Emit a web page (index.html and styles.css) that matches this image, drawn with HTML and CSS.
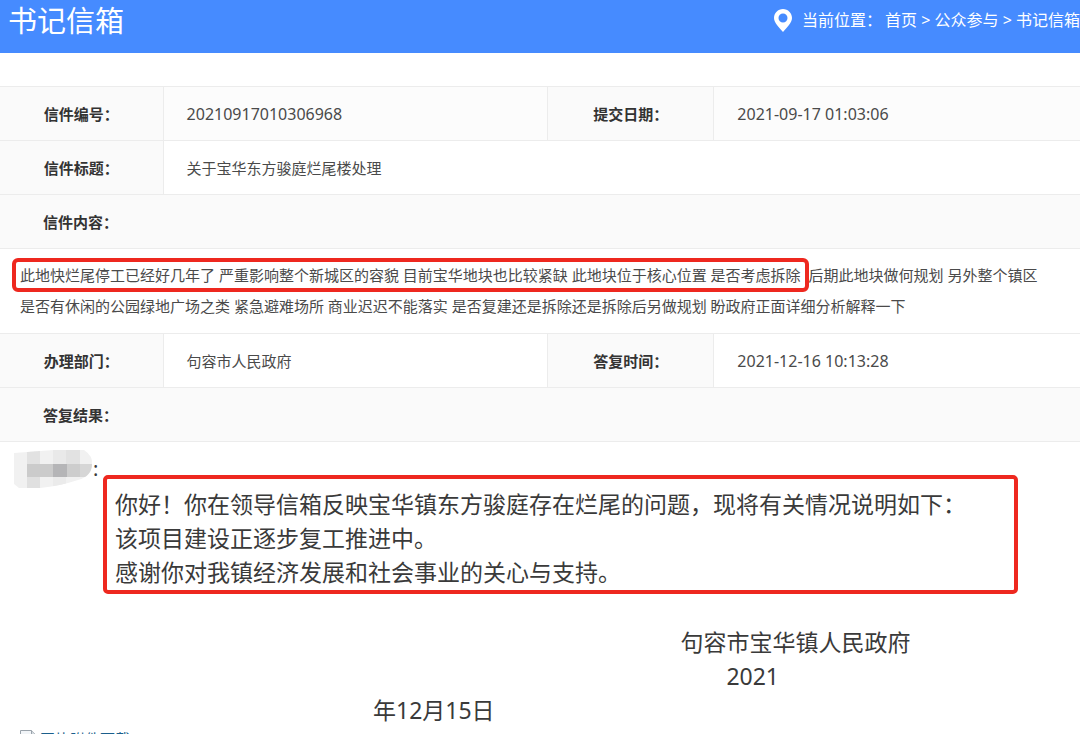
FILE: index.html
```
<!DOCTYPE html>
<html lang="zh-CN">

<head>
    <meta charset="UTF-8">
    <meta name="viewport" content="width=device-width, initial-scale=1.0" />
    <title>书记信箱</title>
    <link rel="stylesheet" href="styles.css">
</head>

<body>
    <header class="top-bar">
        <h1>书记信箱</h1>
        <nav class="crumbs">
            <svg class="pin" viewBox="0 0 18 23" width="18" height="23" aria-hidden="true">
                <path fill="#fff" fill-rule="evenodd" d="M9 0C4 0 0 4 0 9c0 5 5 9 9 14 4-5 9-9 9-14 0-5-4-9-9-9zm0 4.500a4.500 4.500 0 1 1 0 9 4.500 4.500 0 0 1 0-9z" />
            </svg>
            <span class="crumbs-label">当前位置：</span>
            <span><a href="#">首页</a> &gt; <a href="#">公众参与</a> &gt; <a href="#">书记信箱</a></span>
        </nav>
    </header>

    <main>
        <table class="letter">
            <colgroup>
                <col class="col-label">
                <col class="col-value">
                <col class="col-label-wide">
                <col>
            </colgroup>
            <tbody>
                <tr class="shaded">
                    <th scope="row">信件编号：</th>
                    <td class="num">20210917010306968</td>
                    <th scope="row">提交日期：</th>
                    <td class="num">2021-09-17 01:03:06</td>
                </tr>
                <tr>
                    <th scope="row">信件标题：</th>
                    <td colspan="3">关于宝华东方骏庭烂尾楼处理</td>
                </tr>
                <tr>
                    <th class="section" colspan="4">信件内容：</th>
                </tr>
                <tr>
                    <td class="content" colspan="4"><span class="mark">此地快烂尾停工已经好几年了 严重影响整个新城区的容貌 目前宝华地块也比较紧缺 此地块位于核心位置 是否考虑拆除</span> 后期此地块做何规划 另外整个镇区<br>是否有休闲的公园绿地广场之类 紧急避难场所 商业迟迟不能落实 是否复建还是拆除还是拆除后另做规划 盼政府正面详细分析解释一下</td>
                </tr>
                <tr>
                    <th scope="row">办理部门：</th>
                    <td>句容市人民政府</td>
                    <th scope="row">答复时间：</th>
                    <td class="num">2021-12-16 10:13:28</td>
                </tr>
                <tr>
                    <th class="section" colspan="4">答复结果：</th>
                </tr>
            </tbody>
        </table>

        <section class="reply">
            <div class="addressee">
                <!-- sender's name is hidden -->
                <svg viewBox="0 0 79 38" width="79" height="38" aria-hidden="true">
                    <clipPath id="blob">
                        <path d="M0 3L40 0h30q9 6 8 14 0 12-14 16Q46 36 26 38H5l-5-4z" />
                    </clipPath>
                    <g clip-path="url(#blob)">
                        <rect width="79" height="38" fill="#f1f1f1" />
                        <rect x="13" width="13" height="14" fill="#e2e2e2" />
                        <rect x="39" width="13" height="14" fill="#e9e9e9" />
                        <rect x="52" width="14" height="14" fill="#e2e2e2" />
                        <rect x="13" y="14" width="26" height="13" fill="#cbcbcb" />
                        <rect x="39" y="14" width="14" height="13" fill="#b5b5b7" />
                        <rect x="53" y="14" width="13" height="13" fill="#cdcdcd" />
                        <rect x="66" y="14" width="13" height="13" fill="#d6d6d6" />
                        <rect x="13" y="27" width="13" height="11" fill="#e0e0e0" />
                        <rect x="39" y="27" width="13" height="11" fill="#ebebeb" />
                    </g>
                </svg>
                <span>:</span>
            </div>
            <div class="answer">
                <p>你好！你在领导信箱反映宝华镇东方骏庭存在烂尾的问题，现将有关情况说明如下：</p>
                <p>该项目建设正逐步复工推进中。</p>
                <p>感谢你对我镇经济发展和社会事业的关心与支持。</p>
            </div>
            <div class="signature">
                <div class="sign-right">
                    <p>句容市宝华镇人民政府</p>
                    <p class="year">2021</p>
                </div>
                <p class="day">年12月15日</p>
            </div>
        </section>

        <div class="attachment">
            <svg viewBox="0 0 16 18" width="16" height="18" aria-hidden="true">
                <path fill="#f2f5f8" stroke="#9aa3ab" d="M.5.5h11l4 4v13H.5z" />
                <path fill="#d5dbe0" stroke="#9aa3ab" d="M11.500.5v4h4" />
            </svg>
            <a href="#">图片附件下载</a>
        </div>
    </main>
</body>

</html>
```
FILE: styles.css
```
body {
    margin: 0;
    background: #fff;
    color: #4a4a4a;
    font-family: "Noto Sans", "Noto Sans CJK SC", sans-serif;
    font-size: 15px;
}

h1,
p {
    margin: 0;
    font-weight: normal;
}

/* Blue title bar */
.top-bar {
    display: flex;
    justify-content: space-between;
    align-items: flex-start;
    height: 53px;
    padding-left: 8px;
    background: #468bff;
    color: #fff;
}

.top-bar h1 {
    font-size: 29px;
    line-height: 42px;
}

.crumbs {
    display: flex;
    align-items: center;
    font-size: 16px;
    line-height: 40px;
    white-space: nowrap;
}

.crumbs a {
    color: #fff;
    text-decoration: none;
}

.crumbs-label {
    margin-right: 3px;
}

.pin {
    margin-right: 10px;
}

/* Letter details */
.letter {
    width: 100%;
    margin-top: 33px;
    border-collapse: collapse;
    table-layout: fixed;
}

.col-label {
    width: 15.1%;
}

.col-value {
    width: 35.6%;
}

.col-label-wide {
    width: 15.4%;
}

.letter th,
.letter td {
    height: 53px;
    padding: 0;
    border: 1px solid #ececec;
    border-left: 0;
}

.letter th:last-child,
.letter td:last-child {
    border-right: 0;
}

.letter th {
    background: #fafafa;
    color: #333;
    font-weight: bold;
    text-align: center;
}

.letter td {
    padding-left: 23px;
}

.letter .shaded td {
    background: #fcfcfc;
}

.letter .num {
    font-size: 16px;
}

.letter .section {
    padding-left: 43px;
    text-align: left;
}

.letter .content {
    height: auto;
    padding: 11px 10px 11px 20px;
    line-height: 31px;
}

/* Red frame round the quoted line */
.mark {
    margin-left: -4px;
    padding: 3px 4px;
    outline: 4px solid #ee281f;
    border-radius: 2px;
}

/* Official answer */
.reply {
    color: #3a3a3a;
    font-size: 23px;
    line-height: 34px;
}

.addressee {
    display: flex;
    height: 25px;
    padding: 8px 0 0 14px;
}

.addressee span {
    font-size: 20px;
    line-height: 38px;
}

.answer {
    margin: 0 62px 0 103px;
    padding: 8px 8px 1px;
    border: 4px solid #ee281f;
    border-radius: 5px;
}

.signature {
    margin-top: 31px;
}

.sign-right {
    width: 231px;
    margin-left: 63%;
}

.year {
    padding-left: 46px;
}

.day {
    margin-left: 373px;
}

.attachment {
    display: flex;
    gap: 4px;
    padding: 3px 20px;
    line-height: 18px;
}

.attachment a {
    color: #1b5f8c;
    text-decoration: none;
}
```
